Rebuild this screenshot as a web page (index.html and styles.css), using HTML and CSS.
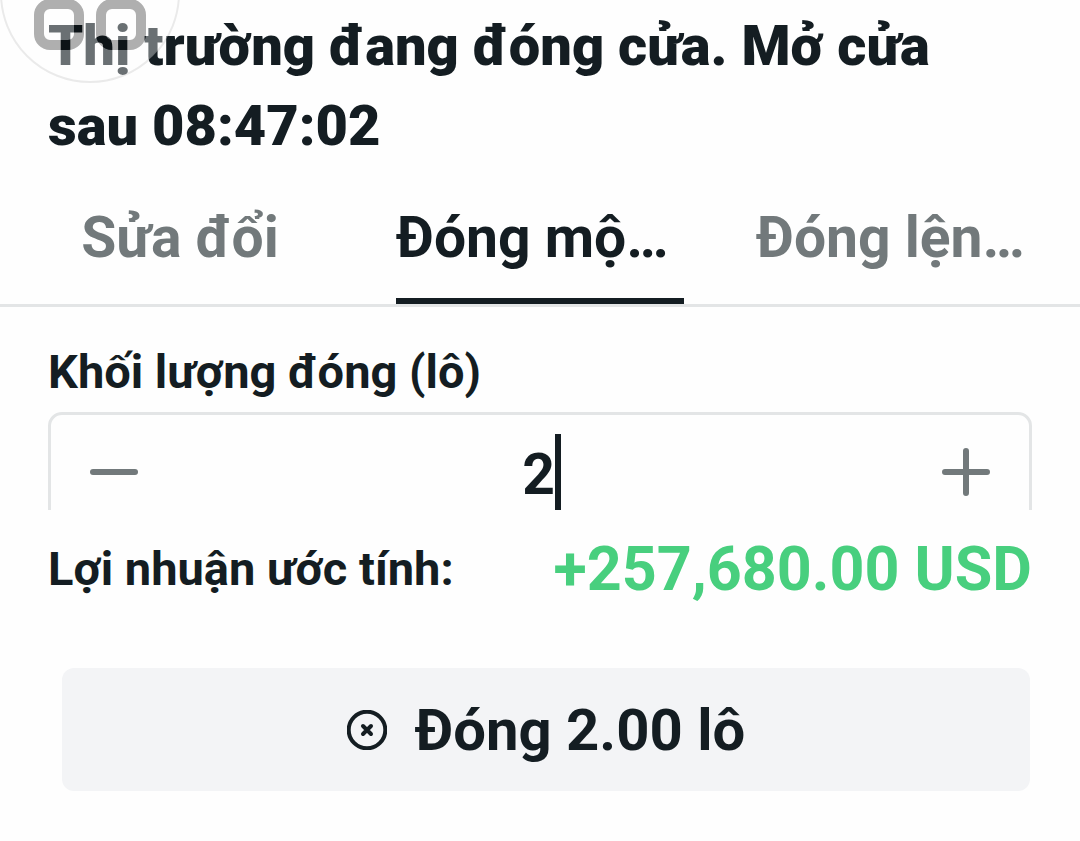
FILE: index.html
```
<!DOCTYPE html>
<html lang="vi">
<head>
    <meta charset="UTF-8">
    <meta name="viewport" content="width=device-width, initial-scale=1.0">
    <title>Đóng lệnh</title>
    <link rel="stylesheet" href="styles.css">
</head>
<body>
    <h1 class="notice">Thị trường đang đóng cửa. Mở cửa sau 08:47:02</h1>

    <div class="tabs" role="tablist">
        <button type="button" class="tab" role="tab">Sửa đổi</button>
        <button type="button" class="tab active cut" role="tab" aria-selected="true">Đóng mộ…</button>
        <button type="button" class="tab cut" role="tab">Đóng lện…</button>
    </div>

    <form id="close-form">
        <div class="fields">
            <label for="volume">Khối lượng đóng (lô)</label>
            <div class="stepper">
                <button type="button" class="step" aria-label="Giảm">
                    <svg viewBox="0 0 48 48"><path d="M3 24H45"/></svg>
                </button>
                <div class="value">
                    <input type="text" id="volume" name="volume" inputmode="decimal" value="2">
                    <span class="caret"></span>
                </div>
                <button type="button" class="step" aria-label="Tăng">
                    <svg viewBox="0 0 48 48"><path d="M3 24H45M24 3V45"/></svg>
                </button>
            </div>
        </div>

        <div class="summary">
            <span class="summary-label">Lợi nhuận ước tính:</span>
            <output class="profit" for="volume">+257,680.00 USD</output>
        </div>

        <button type="submit" class="submit">
            <svg viewBox="0 0 40 40" aria-hidden="true">
                <circle cx="20" cy="20" r="18.3"/>
                <path d="M16 16L24 24M24 16L16 24"/>
            </svg>
            Đóng 2.00 lô
        </button>
    </form>

    <!-- Floating assistant bubble -->
    <svg class="bubble" viewBox="0 0 180 84" aria-hidden="true">
        <mask id="eyes">
            <rect width="180" height="84" fill="#fff"/>
            <rect x="39" y="4" width="40" height="41" rx="11" fill="none" stroke="#000" stroke-width="10"/>
            <rect x="101" y="4" width="40" height="41" rx="11" fill="none" stroke="#000" stroke-width="10"/>
        </mask>
        <circle cx="90" cy="-7" r="89" fill="#fff" fill-opacity="0.37" mask="url(#eyes)"/>
        <circle cx="90" cy="-7" r="89" fill="none" stroke="#000" stroke-opacity="0.08" stroke-width="2"/>
        <g fill="none" stroke="#000" stroke-opacity="0.31" stroke-width="10">
            <rect x="39" y="4" width="40" height="41" rx="11"/>
            <rect x="101" y="4" width="40" height="41" rx="11"/>
        </g>
    </svg>
</body>
</html>
```

FILE: styles.css
```
* {
    box-sizing: border-box;
}

body {
    font-family: Roboto, "Noto Sans", sans-serif;
    background-color: #fefefe;
    color: #141d22;
    margin: 0;
    position: relative;
}

button, input {
    font: inherit;
    color: inherit;
    background: none;
    border: none;
    margin: 0;
    padding: 0;
}

button {
    cursor: pointer;
}

.notice {
    margin: 0;
    padding: 6px 96px 0 48px;
    font-size: 56px;
    line-height: 80px;
    font-weight: 900;
}

/* Tabs */
.tabs {
    display: grid;
    grid-template-columns: repeat(3, 1fr);
    gap: 72px;
    padding: 32px 36px 0;
    border-bottom: 3px solid #e3e5e6;
}

.tab {
    height: 106px;
    padding-bottom: 20px;
    border-bottom: 6px solid transparent;
    font-size: 57px;
    line-height: 72px;
    font-weight: 700;
    color: #72797b;
    white-space: nowrap;
}

.tab.cut {
    text-align: left;
}

.tab.active {
    color: #141d22;
    border-bottom-color: #141d22;
}

/* Volume */
.fields {
    height: 203px;
    padding: 36px 48px 0;
    overflow: hidden;
}

label {
    display: block;
    margin-bottom: 12px;
    font-size: 47px;
    line-height: 57px;
    font-weight: 700;
}

.stepper {
    display: flex;
    align-items: center;
    height: 120px;
    padding: 0 39px;
    border: 3px solid #e3e5e6;
    border-radius: 14px;
}

.step {
    flex: none;
    width: 48px;
    height: 48px;
}

.step svg {
    display: block;
    fill: none;
    stroke: #72797b;
    stroke-width: 6;
    stroke-linecap: round;
}

.value {
    flex: 1;
    display: flex;
    align-items: center;
    justify-content: center;
}

.value input {
    width: 36px;
    padding-top: 6px;
    font-size: 57px;
    line-height: 72px;
    font-weight: 700;
    text-align: right;
    outline: none;
}

.caret {
    width: 6px;
    height: 76px;
    background-color: #141d22;
}

/* Summary */
.summary {
    display: flex;
    align-items: center;
    justify-content: space-between;
    padding: 23px 48px 0;
    line-height: 72px;
    font-weight: 700;
    white-space: nowrap;
}

.summary-label {
    font-size: 47px;
}

.profit {
    font-size: 61px;
    color: #48cf7e;
}

.submit {
    display: flex;
    align-items: center;
    justify-content: center;
    gap: 28px;
    width: calc(100% - 112px);
    height: 123px;
    margin: 63px 50px 49px 62px;
    border-radius: 12px;
    background-color: #f3f4f6;
    font-size: 58px;
    font-weight: 700;
}

.submit svg {
    width: 40px;
    height: 40px;
    fill: none;
    stroke: #141d22;
    stroke-width: 4;
    stroke-linecap: round;
}

.bubble {
    position: absolute;
    top: 0;
    left: 0;
    width: 180px;
    height: 84px;
    pointer-events: none;
}
```
